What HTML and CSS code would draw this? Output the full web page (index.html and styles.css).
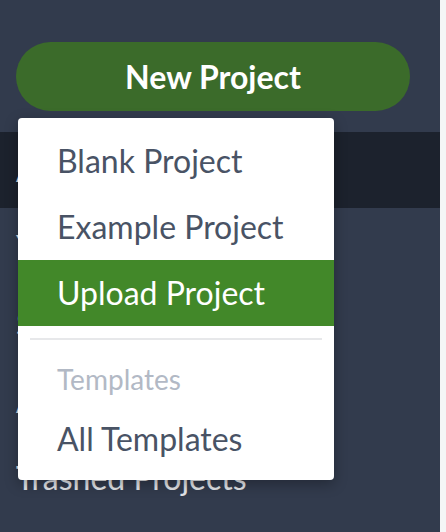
FILE: index.html
```html
<!DOCTYPE html>
<html lang="en">
<head>
<meta charset="utf-8">
<title>New Project menu</title>
<link rel="stylesheet" href="styles.css">
</head>
<body>
<div class="app">
  <aside class="sidebar">
    <button class="new-project">New Project</button>
    <ul class="nav">
      <li class="nav-item active">All Projects</li>
      <li class="nav-item">Your Projects</li>
      <li class="nav-item">Shared with you</li>
      <li class="nav-item">Archived Projects</li>
      <li class="nav-item">Trashed Projects</li>
    </ul>
    <div class="menu">
      <div class="menu-item">Blank Project</div>
      <div class="menu-item">Example Project</div>
      <div class="menu-item selected">Upload Project</div>
      <div class="divider"></div>
      <div class="menu-header">Templates</div>
      <div class="menu-item">All Templates</div>
    </div>
  </aside>
  <main class="content"></main>
</div>
</body>
</html>
```
FILE: styles.css
```css
html, body {
  margin: 0;
  padding: 0;
  height: 100%;
}
body {
  font-family: Lato, "Noto Sans", sans-serif;
  background: #f4f5f6;
}
.app {
  display: flex;
  height: 532px;
}
.sidebar {
  position: relative;
  width: 440px;
  flex: none;
  background: #323b4d;
  padding-top: 42px;
  box-sizing: border-box;
}
.content {
  flex: 1;
  background: #f4f5f6;
}
.new-project {
  display: block;
  margin: 0 0 0 16px;
  width: 394px;
  height: 69px;
  border: none;
  border-radius: 35px;
  background: #3b6b2a;
  color: #fff;
  font-family: Lato, "Noto Sans", sans-serif;
  font-weight: 700;
  font-size: 32px;
  padding: 0;
}
.nav {
  list-style: none;
  margin: 21px 0 0;
  padding: 0;
}
.nav-item {
  height: 77px;
  line-height: 77px;
  padding-left: 16px;
  color: #e2e4e8;
  font-size: 32px;
}
.nav-item.active {
  background: #1c222d;
  height: 76px;
  line-height: 76px;
}
.menu {
  position: absolute;
  top: 118px;
  left: 18px;
  width: 316px;
  background: #fff;
  border-radius: 4px;
  box-shadow: 0 4px 14px rgba(0, 0, 0, 0.3);
  padding: 10px 0 8px;
}
.menu-item {
  height: 66px;
  line-height: 66px;
  padding-left: 39px;
  font-size: 32px;
  color: #495365;
}
.menu-item.selected {
  background: #428829;
  color: #fff;
}
.divider {
  height: 2px;
  background: #e7e8ea;
  margin: 12px 12px 0;
}
.menu-header {
  padding-top: 12px;
  height: 54px;
  line-height: 54px;
  padding-left: 39px;
  font-size: 28px;
  color: #b2b9c5;
}
```
